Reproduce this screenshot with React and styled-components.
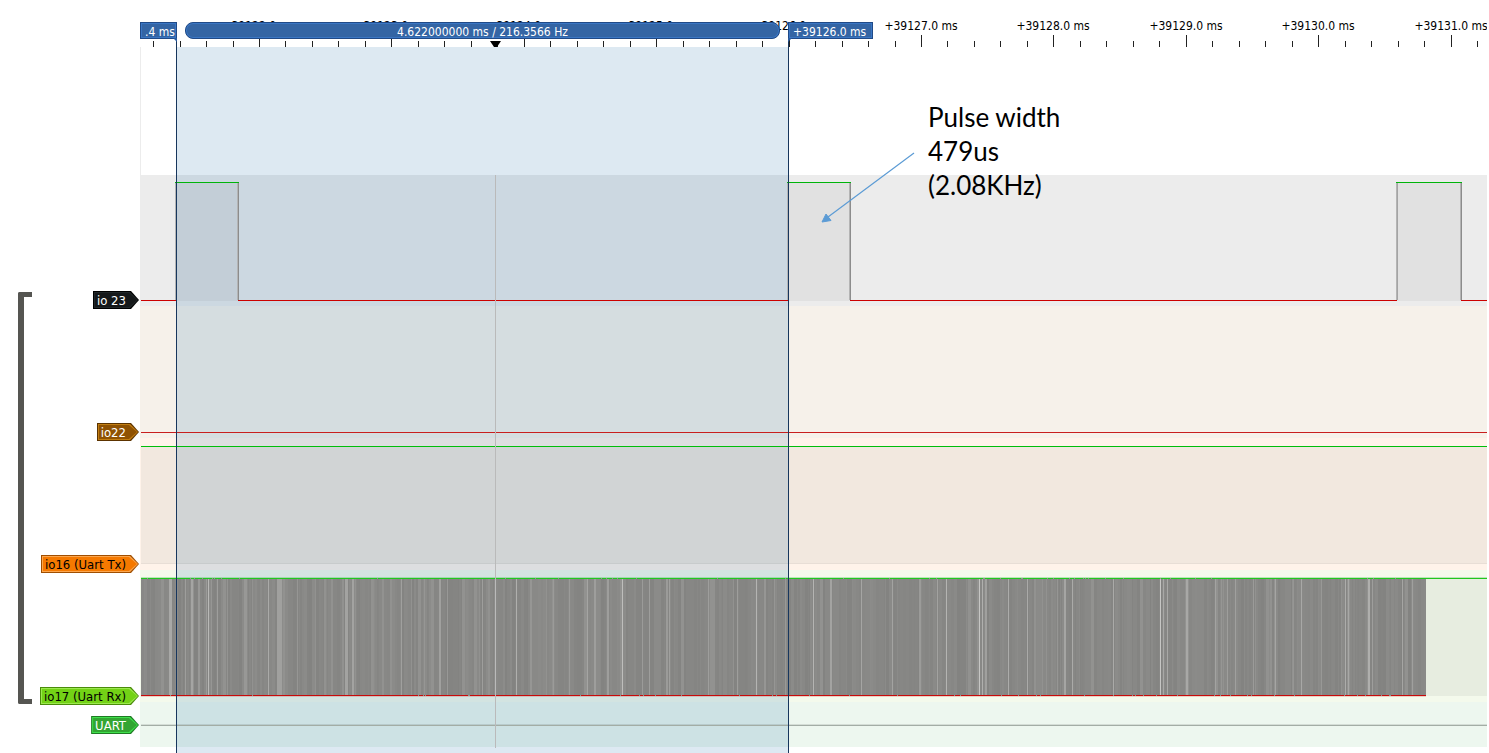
import React from 'react'
import styled, { createGlobalStyle } from 'styled-components';

const MS = 132.4;
const FIRST_TICK = 119;
const FIRST_LABEL = 39122;

const ticks = [];
for (let i = -5; i <= 50; i++) {
  const major = i % 5 === 0;
  ticks.push({
    x: Math.round(FIRST_TICK + (i * MS) / 5),
    major,
    label: major && i >= 0 ? `+${FIRST_LABEL + i / 5}.0 ms` : null,
  });
}

// gaps between bytes on the rx line: [x, width, lightness]
const GAPS = [
  [29, 3, 168], [45, 1, 158], [51, 2, 165], [58, 2, 152], [66, 1, 155], [68, 1, 185], [71, 1, 150],
  [77, 1, 158], [87, 1, 148], [104, 3, 152], [128, 1, 170], [137, 5, 160], [157, 1, 150],
  [205, 3, 163], [212, 2, 163], [233, 1, 145], [261, 1, 160], [284, 1, 150], [299, 2, 160],
  [307, 1, 152], [342, 1, 158], [376, 1, 175], [390, 2, 150], [413, 1, 155], [429, 1, 155],
  [447, 1, 165], [454, 2, 158], [467, 2, 158], [482, 1, 190], [502, 1, 155], [509, 1, 158],
  [526, 2, 155], [529, 1, 160], [568, 1, 158], [597, 1, 158], [616, 1, 180], [624, 2, 150],
  [634, 1, 150], [645, 1, 153], [673, 1, 180], [690, 2, 163], [721, 1, 165], [752, 1, 163],
  [779, 2, 155], [797, 1, 162], [806, 1, 180], [839, 1, 198], [842, 1, 175], [845, 2, 160],
  [868, 1, 172], [887, 1, 170], [917, 1, 150], [924, 2, 165], [932, 1, 170], [973, 1, 170],
  [1020, 1, 198], [1023, 1, 168], [1027, 1, 168], [1046, 2, 168], [1075, 1, 163], [1081, 1, 150],
  [1087, 1, 158], [1095, 1, 160], [1113, 1, 155], [1135, 1, 165], [1153, 1, 150], [1161, 1, 168],
  [1181, 1, 152], [1205, 1, 172], [1208, 1, 168], [1228, 2, 175], [1232, 1, 158], [1262, 1, 165],
  [1272, 1, 160],
];

const BURST_END = 1286;

const buildBurst = () => {
  let seed = 17;
  const rand = () => {
    seed = (seed * 1103515245 + 12345) % 2147483648;
    return seed / 2147483648;
  };
  const bars = [];
  const breaks = [];
  let x = 1;
  while (x < BURST_END) {
    const w = Math.min(1 + Math.floor(rand() * 3), BURST_END - x);
    const r = rand();
    const l = r > 0.9 ? 146 : Math.round(131 + r * 10);
    bars.push([x, w, l]);
    if (rand() > 0.86) breaks.push([x, rand() > 0.4 ? 'top' : 'bottom']);
    x += w;
  }
  return { bars, breaks };
};

const burst = buildBurst();

const Ruler = () => (
  <RulerSvg aria-label="Time ruler">
    {ticks.map((t, i) => (
      <g key={i}>
        <rect x={t.x} y={t.major ? 35 : 41} width="1" height={t.major ? 12 : 6} fill="#222" />
        {t.label && <TickLabel x={t.x} y="30">{t.label}</TickLabel>}
      </g>
    ))}
    <path d="M350 41h11l-4 6h-3z" fill="#000" />
  </RulerSvg>
);

const PULSES = [[36, 99], [648, 711], [1257, 1322]];

const PulseTrace = () => (
  <Trace>
    {PULSES.map(([a, b]) => (
      <g key={a}>
        <rect x={a} y="7" width={b - a} height="119" fill="rgba(0,0,0,0.043)" />
        <rect x={a - 1} y="7" width="1" height="118" fill="#b4b4b4" />
        <rect x={a} y="7" width="1" height="118" fill="#a4a4a4" />
        <rect x={b - 2} y="7" width="1" height="118" fill="#b4b4b4" />
        <rect x={b - 1} y="7" width="1" height="118" fill="#8c8c8c" />
        <rect x={a - 1} y="7" width={b - a + 1} height="1" fill="#00b40a" />
      </g>
    ))}
    <rect x="1" y="125" width="35" height="1" fill="#cc0000" />
    <rect x="98" y="125" width="550" height="1" fill="#cc0000" />
    <rect x="710" y="125" width="547" height="1" fill="#cc0000" />
    <rect x="1321" y="125" width="100%" height="1" fill="#cc0000" />
  </Trace>
);

const LowTrace = () => (
  <Trace>
    <rect x="1" y="126" width="100%" height="1" fill="#c81e1e" />
  </Trace>
);

const HighTrace = () => (
  <Trace>
    <rect x="1" y="8" width="100%" height="118" fill="rgba(0,40,10,0.05)" />
    <rect x="1" y="8" width="100%" height="1" fill="#00be0a" />
    <rect x="1" y="125" width="100%" height="1" fill="rgba(0,0,0,0.04)" />
  </Trace>
);

const BurstTrace = () => (
  <Trace>
    <rect x={BURST_END} y="8" width="100%" height="118" fill="rgba(0,0,0,0.05)" />
    <rect x="1" y="8" width="100%" height="1" fill="#1ec81e" />
    <rect x="1" y="7" width="100%" height="1" fill="rgba(60,190,60,0.3)" />
    {[...burst.bars, ...GAPS].map(([x, w, l], i) => (
      <rect key={i} x={x} y="9" width={w} height="116" fill={`rgb(${l},${l},${l - 2})`} />
    ))}
    <rect x="1" y="125" width={BURST_END - 1} height="1" fill="#c80a0a" />
    <rect x="1" y="126" width={BURST_END - 1} height="1" fill="rgba(200,40,40,0.2)" />
    {burst.breaks.map(([x, side]) => (
      <rect key={x} x={x} y={side === 'top' ? 8 : 125} width="1" height="1" fill="#8c968c" />
    ))}
  </Trace>
);

const DecoderTrace = () => (
  <Trace>
    <rect x="1" y="22" width="100%" height="1" fill="rgba(0,0,0,0.1)" />
    <rect x="1" y="23" width="100%" height="1" fill="#a3ada5" />
  </Trace>
);

const App = () => {
  return (
    <>
      <GlobalStyle />
      <Page>
        <Sidebar>
          <Group>
            <Bracket />
            <Tags>
              <Tag fill="#15181a" light="#202628" edge="#000" color="#fff">io 23</Tag>
              <Tag fill="#8f5202" light="#c17d11" edge="#5c3300" color="#fff">io22</Tag>
              <Tag fill="#f57900" light="#fca64e" edge="#a04e00" color="#000">io16 (Uart Tx)</Tag>
              <Tag fill="#73d216" light="#9be84e" edge="#4a8c0a" color="#000">io17 (Uart Rx)</Tag>
            </Tags>
          </Group>
          <Tag fill="#33a532" light="#3fe04c" edge="#1e7a22" color="#fff">UART</Tag>
        </Sidebar>
        <Plot>
          <RulerRow>
            <Ruler />
          </RulerRow>
          <Blank />
          <Channel height={131} bg="#ececec"><PulseTrace /></Channel>
          <Channel height={132} bg="#f6f1ea"><LowTrace /></Channel>
          <Channel height={132} bg="#fff3ea"><HighTrace /></Channel>
          <Channel height={132} bg="#f4faec"><BurstTrace /></Channel>
          <Channel height={45} bg="#edf7ef"><DecoderTrace /></Channel>
          <Selection />
          <HoverLine />
          <Cursor $x={36} />
          <Cursor $x={648} />
          <Flag $x={0} $width={37} $end>.4 ms</Flag>
          <Span>4.622000000 ms / 216.3566 Hz</Span>
          <Flag $x={648} $width={85}>+39126.0 ms</Flag>
          <Arrow viewBox="0 0 96 74" aria-hidden="true">
            <path d="M94 2 8 66" stroke="#5b9bd5" strokeWidth="1.2" fill="none" />
            <path d="M2 71 6 63 11 69.5z" fill="#5b9bd5" stroke="#5b9bd5" />
          </Arrow>
          <Note>
            Pulse width<br />479us<br />(2.08KHz)
          </Note>
        </Plot>
      </Page>
    </>
  )
}

const Tag = ({ fill, light, edge, color, children }) => (
  <TagShape $edge={edge} $light={light} $fill={fill} $color={color}>
    <span>{children}</span>
  </TagShape>
);

const Channel = ({ height, bg, children }) => (
  <ChannelRow $height={height} $bg={bg}>{children}</ChannelRow>
);

export default App

const UI_FONT = '"DejaVu Sans Condensed", "Noto Sans", sans-serif';

const GlobalStyle = createGlobalStyle`
    * {
        box-sizing: border-box;
    }
    body {
        margin: 0;
        background: #fff;
        font-family: ${UI_FONT};
        font-size: 12px;
    }
`;
const Page = styled.main`
    display: flex;
    min-height: 100vh;
    padding-right: 2px;
    overflow: hidden;
`;
const Sidebar = styled.aside`
    flex: 0 0 140px;
    display: flex;
    flex-direction: column;
    align-items: flex-end;
    gap: 11px;
    padding: 291px 1px 0 18px;
`;
const Group = styled.div`
    align-self: stretch;
    display: flex;
    justify-content: space-between;
`;
const Bracket = styled.div`
    width: 14px;
    margin: 1px 0;
    border: 5px solid #555551;
    border-left-width: 6px;
    border-right: none;
    border-radius: 2px 0 0 2px;
`;
const Tags = styled.div`
    display: flex;
    flex-direction: column;
    align-items: flex-end;
    gap: 114px;
`;
const TagShape = styled.div`
    position: relative;
    height: 18px;
    padding: 0 13px 0 4px;
    font-size: 13px;
    line-height: 19px;
    white-space: nowrap;
    color: ${(p) => p.$color};
    background: ${(p) => p.$edge};
    clip-path: polygon(0 0, calc(100% - 8px) 0, 100% 50%, calc(100% - 8px) 100%, 0 100%);
    &::before,
    &::after {
        content: "";
        position: absolute;
        inset: 1px;
        background: ${(p) => p.$light};
        clip-path: polygon(0 0, calc(100% - 8px) 0, 100% 50%, calc(100% - 8px) 100%, 0 100%);
    }
    &::after {
        inset: 2px;
        background: ${(p) => p.$fill};
    }
    span {
        position: relative;
        z-index: 1;
    }
`;
const Plot = styled.section`
    position: relative;
    flex: 1;
    min-width: 0;
    overflow: hidden;
`;
const RulerRow = styled.div`
    height: 47px;
`;
const RulerSvg = styled.svg`
    display: block;
    width: 100%;
    height: 100%;
`;
const TickLabel = styled.text`
    font-family: ${UI_FONT};
    font-size: 12px;
    text-anchor: middle;
    fill: #000;
`;
const Blank = styled.div`
    height: 128px;
    border-left: 1px solid #ececec;
`;
const ChannelRow = styled.div`
    height: ${(p) => p.$height}px;
    background: ${(p) => p.$bg};
`;
const Trace = styled.svg`
    position: relative;
    z-index: 2;
    display: block;
    width: 100%;
    height: 100%;
    shape-rendering: crispEdges;
`;
const Selection = styled.div`
    position: absolute;
    z-index: 1;
    left: 37px;
    top: 47px;
    bottom: 0;
    width: 611px;
    background: rgba(30, 106, 168, 0.15);
`;
const HoverLine = styled.div`
    position: absolute;
    z-index: 3;
    left: 355px;
    top: 175px;
    height: 573px;
    width: 1px;
    background: #bababa;
`;
const Cursor = styled.div`
    position: absolute;
    z-index: 3;
    left: ${(p) => p.$x}px;
    top: 38px;
    bottom: 0;
    width: 1px;
    background: #17365d;
`;
const Flag = styled.div`
    position: absolute;
    z-index: 4;
    left: ${(p) => p.$x}px;
    top: 22px;
    width: ${(p) => p.$width}px;
    height: 17px;
    padding: 0 4px;
    border: 1px solid #204a87;
    box-shadow: inset 0 0 0 1px #3a76c4;
    background: #3465a4;
    color: #fff;
    line-height: 18px;
    text-align: ${(p) => (p.$end ? 'right' : 'left')};
    white-space: nowrap;
    &::after {
        content: "";
        position: absolute;
        top: 15px;
        ${(p) => (p.$end ? 'right' : 'left')}: -1px;
        border-top: 4px solid #2b5ca0;
        border-${(p) => (p.$end ? 'left' : 'right')}: 4px solid transparent;
    }
`;
const Span = styled.div`
    position: absolute;
    z-index: 4;
    left: 45px;
    top: 22px;
    width: 595px;
    height: 17px;
    border: 1px solid #204a87;
    border-radius: 8px;
    box-shadow: inset 0 0 0 1px #3a76c4;
    background: #3465a4;
    color: #fff;
    line-height: 18px;
    text-align: center;
`;
const Arrow = styled.svg`
    position: absolute;
    z-index: 4;
    left: 680px;
    top: 151px;
    width: 96px;
    height: 74px;
`;
const Note = styled.p`
    position: absolute;
    z-index: 4;
    left: 788px;
    top: 100px;
    margin: 0;
    color: #000;
    font-family: Lato, sans-serif;
    font-size: 26px;
    line-height: 34px;
    white-space: nowrap;
`;
